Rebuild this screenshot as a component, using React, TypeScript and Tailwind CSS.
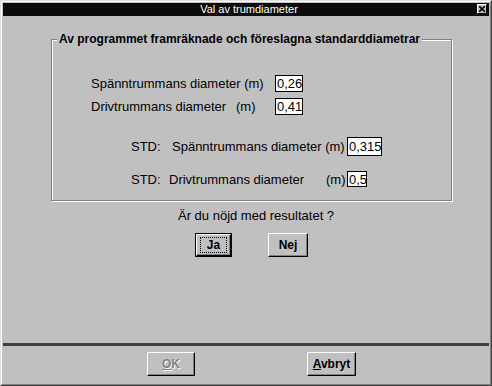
import React from "react";

const font = { fontFamily: '"Liberation Sans", Arial, sans-serif' };

const Field = ({ value, w, h }: { value: string; w: string; h: string }) => (
  <div className={`${w} ${h} flex items-center border border-black bg-white pl-px text-[13px] leading-none text-black`}>
    {value}
  </div>
);

const Btn = ({
  children,
  w,
  isDefault,
}: {
  children: React.ReactNode;
  w: string;
  isDefault?: boolean;
}) => {
  const face = (
    <div className="flex h-full w-full items-center justify-center border border-t-white border-l-white border-r-black border-b-black shadow-[inset_-1px_-1px_0_#808080] text-[12px] font-bold text-black">
      {children}
    </div>
  );
  return (
    <div className={`${w} h-[24px] ${isDefault ? "border border-black" : ""}`}>{face}</div>
  );
};

export default function App() {
  return (
    <div className="h-[386px] w-[492px] bg-[#c0c0c0]" style={font}>
      <div className="flex h-full w-full flex-col border border-t-[#dfdfdf] border-l-[#dfdfdf] border-r-[#404040] border-b-[#404040]">
        <div className="flex h-full w-full flex-col border border-t-white border-l-white border-r-[#808080] border-b-[#808080] p-px">
          {/* title bar */}
          <div className="relative flex h-[13px] items-center justify-center bg-[#0c0c0c] pl-[6px]">
            <span className="text-[11px] leading-none text-white">Val av trumdiameter</span>
            <div className="absolute right-[2px] top-[1px] flex h-[10px] w-[10px] items-center justify-center border border-t-white border-l-white border-r-black border-b-black bg-[#c0c0c0]">
              <svg width="6" height="6" viewBox="0 0 6 6">
                <path d="M0 0L6 6M6 0L0 6" stroke="black" strokeWidth="1.6" />
              </svg>
            </div>
          </div>

          {/* group box */}
          <div className="relative ml-[48px] mt-[23px] h-[162px] w-[401px] border border-[#808080] shadow-[inset_1px_1px_0_#fff,1px_1px_0_#fff]">
            <span className="absolute left-[5px] top-[-9px] bg-[#c0c0c0] px-[2px] text-[12px] font-bold leading-[16px] text-black">
              Av programmet framräknade och föreslagna standarddiametrar
            </span>
            <div className="flex flex-col pl-[39px] pt-[35px] text-[13px] leading-none text-black">
              <div className="flex h-[17px] items-center">
                <span className="w-[184px]">Spänntrummans diameter (m)</span>
                <Field value="0,26" w="w-[28px]" h="h-[17px]" />
              </div>
              <div className="mt-[6px] flex h-[17px] items-center">
                <span className="w-[145px]">Drivtrummans diameter</span>
                <span className="w-[39px]">(m)</span>
                <Field value="0,41" w="w-[28px]" h="h-[17px]" />
              </div>
              <div className="ml-[40px] mt-[22px] flex h-[19px] items-center">
                <span className="w-[41px]">STD:</span>
                <span className="w-[175px]">Spänntrummans diameter (m)</span>
                <Field value="0,315" w="w-[35px]" h="h-[19px]" />
              </div>
              <div className="ml-[40px] mt-[15px] flex h-[16px] items-center">
                <span className="w-[38px]">STD:</span>
                <span className="w-[157px]">Drivtrummans diameter</span>
                <span className="w-[21px]">(m)</span>
                <Field value="0,5" w="w-[20px]" h="h-[16px]" />
              </div>
            </div>
          </div>

          {/* question */}
          <div className="ml-[175px] mt-[7px] text-[13px] leading-[16px] text-black">
            Är du nöjd med resultatet ?
          </div>
          <div className="ml-[192px] mt-[9px] flex gap-[36px]">
            <Btn w="w-[37px]" isDefault>
              <span className="flex h-[16px] w-[27px] items-center justify-center border border-dotted border-black">
                Ja
              </span>
            </Btn>
            <Btn w="w-[40px]">Nej</Btn>
          </div>

          {/* separator + footer */}
          <div className="mt-auto h-[3px] bg-[#404040]" />
          <div className="flex h-[37px] items-start gap-[112px] pl-[144px] pt-[6px]">
            <Btn w="w-[48px]">
              <span className="text-[#808080] [text-shadow:1px_1px_0_#fff]">
                <span className="underline">O</span>K
              </span>
            </Btn>
            <Btn w="w-[49px]">
              <span>
                <span className="underline">A</span>vbryt
              </span>
            </Btn>
          </div>
        </div>
      </div>
    </div>
  );
}
